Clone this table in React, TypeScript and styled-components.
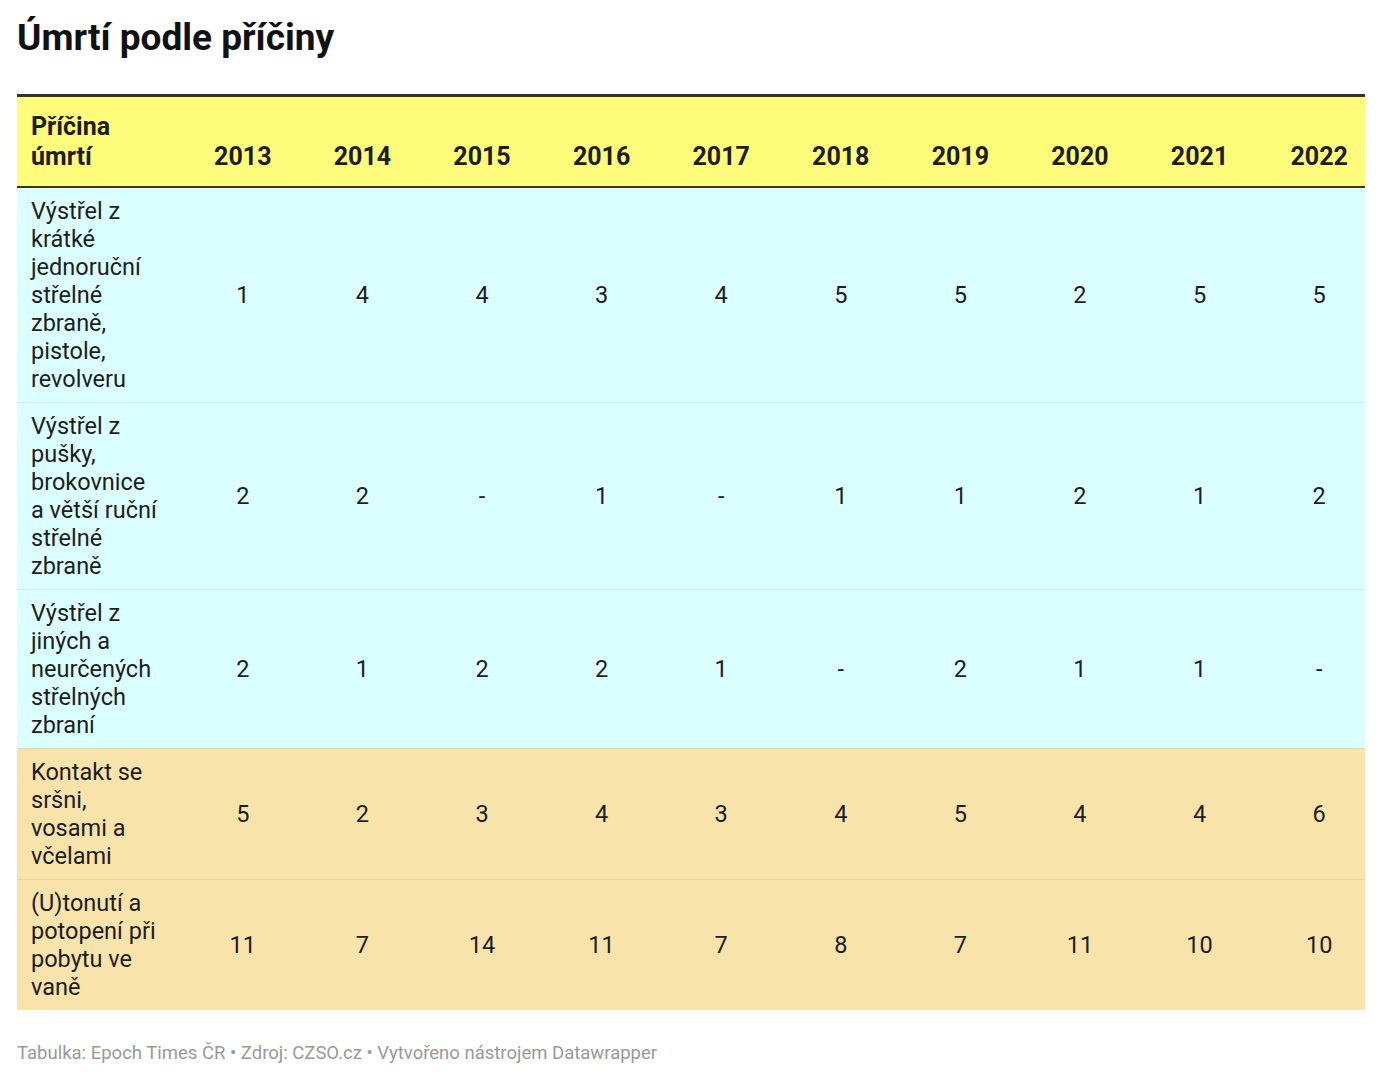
import React from "react";
import styled, { createGlobalStyle } from "styled-components";

const Global = createGlobalStyle`
  html, body { margin: 0; padding: 0; background: #ffffff; }
  body { font-family: Roboto, "Noto Sans", "Liberation Sans", sans-serif; color: #1d1d1d; }
`;

const Page = styled.div`
  padding: 15px 17px 0 17px;
  width: 1348px;
`;

const Title = styled.h1`
  margin: 0 0 33px 0;
  font-size: 37px;
  line-height: 46px;
  font-weight: 700;
  color: #111;
`;

const Table = styled.table`
  width: 1348px;
  border-collapse: collapse;
  table-layout: fixed;
  border-top: 3px solid #333;
`;

const HeadRow = styled.tr`
  background: #fefc7a;
  border-bottom: 2px solid #333;
`;

const Th = styled.th<{ $first?: boolean }>`
  font-size: 25px;
  line-height: 30px;
  font-weight: 700;
  color: #1d1d1d;
  vertical-align: bottom;
  padding: ${(p) => (p.$first ? "15px 10px 14px 14px" : "15px 0 14px 28px")};
  text-align: ${(p) => (p.$first ? "left" : "center")};
`;

const Row = styled.tr<{ $bg: string; $line: string }>`
  background: ${(p) => p.$bg};
  border-top: 1px solid ${(p) => p.$line};
`;

const Td = styled.td<{ $first?: boolean }>`
  font-size: 23.5px;
  line-height: 28px;
  font-weight: 400;
  color: #1d1d1d;
  vertical-align: middle;
  padding: ${(p) => (p.$first ? "9px 10px 9px 14px" : "9px 0 9px 28px")};
  text-align: ${(p) => (p.$first ? "left" : "center")};
`;

const Footer = styled.div`
  margin-top: 32px;
  font-size: 18.5px;
  line-height: 22px;
  color: #999999;
`;

const years = [2013, 2014, 2015, 2016, 2017, 2018, 2019, 2020, 2021, 2022];

const rows: { label: string; values: string[]; bg: string; line: string }[] = [
  {
    label: "Výstřel z krátké jednoruční střelné zbraně, pistole, revolveru",
    values: ["1", "4", "4", "3", "4", "5", "5", "2", "5", "5"],
    bg: "#dbffff",
    line: "#333",
  },
  {
    label: "Výstřel z pušky, brokovnice a větší ruční střelné zbraně",
    values: ["2", "2", "-", "1", "-", "1", "1", "2", "1", "2"],
    bg: "#dbffff",
    line: "#c6eded",
  },
  {
    label: "Výstřel z jiných a neurčených střelných zbraní",
    values: ["2", "1", "2", "2", "1", "-", "2", "1", "1", "-"],
    bg: "#dbffff",
    line: "#c6eded",
  },
  {
    label: "Kontakt se sršni, vosami a včelami",
    values: ["5", "2", "3", "4", "3", "4", "5", "4", "4", "6"],
    bg: "#f8e3aa",
    line: "#ecd49a",
  },
  {
    label: "(U)tonutí a potopení při pobytu ve vaně",
    values: ["11", "7", "14", "11", "7", "8", "7", "11", "10", "10"],
    bg: "#f8e3aa",
    line: "#ecd49a",
  },
];

export default function App() {
  return (
    <>
      <Global />
      <Page>
        <Title>Úmrtí podle příčiny</Title>
        <Table>
          <colgroup>
            <col style={{ width: 152 }} />
            {years.map((y) => (
              <col key={y} />
            ))}
          </colgroup>
          <thead>
            <HeadRow>
              <Th $first>Příčina úmrtí</Th>
              {years.map((y) => (
                <Th key={y}>{y}</Th>
              ))}
            </HeadRow>
          </thead>
          <tbody>
            {rows.map((r, i) => (
              <Row key={i} $bg={r.bg} $line={i === 0 ? "#333" : r.line}>
                <Td $first>{r.label}</Td>
                {r.values.map((v, j) => (
                  <Td key={j}>{v}</Td>
                ))}
              </Row>
            ))}
          </tbody>
        </Table>
        <Footer>Tabulka: Epoch Times ČR • Zdroj: CZSO.cz • Vytvořeno nástrojem Datawrapper</Footer>
      </Page>
    </>
  );
}
